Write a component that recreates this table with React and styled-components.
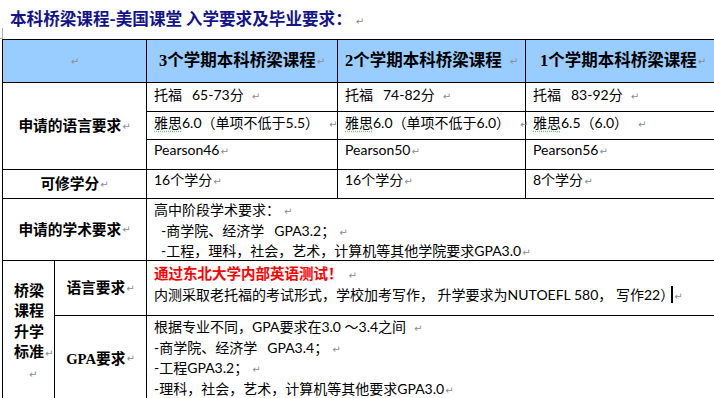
import React from "react";
import styled, { createGlobalStyle } from "styled-components";

const GlobalStyle = createGlobalStyle`
  html, body { margin: 0; padding: 0; background: #fff; overflow: hidden; }
  body { font-family: Lato, "Noto Sans CJK SC", sans-serif; color: #000; }
`;

const Page = styled.div`
  position: relative;
  width: 714px;
  height: 398px;
  overflow: hidden;
  padding-left: 2px;
  box-sizing: border-box;
`;

const Corner = styled.span`
  position: absolute;
  left: 0;
  top: 28px;
  width: 2px;
  height: 10px;
  border-right: 1px solid #b0b0b0;
  border-bottom: 1px solid #b0b0b0;
`;

const Title = styled.h1`
  margin: 0;
  padding: 7px 0 0 8px;
  height: 39px;
  box-sizing: border-box;
  font: bold 16.6px/22px "Noto Sans CJK SC", sans-serif;
  color: #14148a;
  white-space: nowrap;
`;

const Grid = styled.div`
  display: grid;
  grid-template-columns: 52px 92px 191px 188px 195px;
  grid-template-rows: 43px 29px 28px 30px 29px 62px 55px 86px;
  border-left: 1px solid #000;
  border-top: 1px solid #000;
  width: max-content;
`;

const Cell = styled.div`
  grid-column: ${(p) => p.$col};
  grid-row: ${(p) => p.$row};
  border-right: 1px solid #000;
  border-bottom: 1px solid #000;
  box-sizing: border-box;
  min-width: 0;
  white-space: nowrap;
`;

const HeadCell = styled(Cell)`
  background: #99ccff;
  display: flex;
  align-items: center;
  justify-content: center;
  font: bold 16.5px/22px "Liberation Serif", "Noto Sans CJK SC", serif;
`;

const LabelCell = styled(Cell)`
  display: flex;
  align-items: center;
  justify-content: center;
  font: bold 14.7px/20px "Liberation Serif", "Noto Sans CJK SC", serif;
`;

const StackCell = styled(Cell)`
  display: flex;
  flex-direction: column;
  justify-content: center;
  padding-left: 11px;
  font: bold 15px/20.5px "Noto Sans CJK SC", sans-serif;
`;

const BodyCell = styled(Cell)`
  padding: ${(p) => (p.$top ? p.$top : "1px")} 7px 0;
  font-size: 14px;
  line-height: 20.5px;
`;

const Line = styled.div`
  padding-left: ${(p) => p.$indent || 0}px;
`;

const Mark = styled.span`
  font: 10px "DejaVu Sans", sans-serif;
  color: #8c8c8c;
  margin-left: ${(p) => p.$gap || 1}px;
`;

const Gap = styled.span`
  display: inline-block;
  width: ${(p) => p.$w}px;
`;

const Spell = styled.span`
  text-decoration: underline dotted #72c872;
  text-underline-offset: 3px;
`;

const Red = styled.span`
  color: #ff0000;
  font-weight: bold;
  font-size: 14.5px;
  font-family: "Noto Sans CJK SC", sans-serif;
`;

const Caret = styled.span`
  display: inline-block;
  width: 2px;
  height: 17px;
  background: #000;
  vertical-align: -3px;
  margin-left: -3px;
`;

const headers = ["3个学期本科桥梁课程", "2个学期本科桥梁课程", "1个学期本科桥梁课程"];
const toefl = ["65-73分", "74-82分", "83-92分"];
const ielts = ["6.0（单项不低于5.5）", "6.0（单项不低于6.0）", "6.5（6.0）"];
const pearson = ["Pearson46", "Pearson50", "Pearson56"];
const credits = ["16个学分", "16个学分", "8个学分"];

export default function App() {
  return (
    <>
      <GlobalStyle />
      <Page>
        <Corner />
        <Title>
          本科桥梁课程-美国课堂 入学要求及毕业要求：<Mark $gap={4}>↵</Mark>
        </Title>
        <Grid>
          <HeadCell $col="1 / 3" $row="1">
            <Mark>↵</Mark>
          </HeadCell>
          {headers.map((h, i) => (
            <HeadCell key={h} $col={`${i + 3}`} $row="1">
              {h}
              <Mark $gap={i === 1 ? 8 : 1}>↵</Mark>
            </HeadCell>
          ))}

          <LabelCell $col="1 / 3" $row="2 / 5">
            申请的语言要求<Mark>↵</Mark>
          </LabelCell>
          {toefl.map((t, i) => (
            <BodyCell key={t} $col={`${i + 3}`} $row="2" $top="2px">
              托福<Gap $w={10} />
              {t}
              <Mark $gap={8}>↵</Mark>
            </BodyCell>
          ))}
          {ielts.map((t, i) => (
            <BodyCell key={t} $col={`${i + 3}`} $row="3">
              <Spell>雅思</Spell>
              {t}
              <Mark $gap={10}>↵</Mark>
            </BodyCell>
          ))}
          {pearson.map((t, i) => (
            <BodyCell key={t} $col={`${i + 3}`} $row="4" $top="0px">
              {t}
              <Mark>↵</Mark>
            </BodyCell>
          ))}

          <LabelCell $col="1 / 3" $row="5">
            可修学分<Mark>↵</Mark>
          </LabelCell>
          {credits.map((t, i) => (
            <BodyCell key={i} $col={`${i + 3}`} $row="5" $top="0px">
              {t}
              <Mark>↵</Mark>
            </BodyCell>
          ))}

          <LabelCell $col="1 / 3" $row="6">
            申请的学术要求<Mark>↵</Mark>
          </LabelCell>
          <BodyCell $col="3 / 6" $row="6">
            <Line>
              高中阶段学术要求：<Mark $gap={4}>↵</Mark>
            </Line>
            <Line $indent={7}>
              -商学院、经济学<Gap $w={10} />GPA3.2；<Mark $gap={4}>↵</Mark>
            </Line>
            <Line $indent={7}>
              -工程，理科，社会，艺术，计算机等其他学院要求GPA3.0<Mark>↵</Mark>
            </Line>
          </BodyCell>

          <StackCell $col="1" $row="7 / 9">
            <Line>桥梁</Line>
            <Line>课程</Line>
            <Line>升学</Line>
            <Line>
              标准<Mark>↵</Mark>
            </Line>
            <Line $indent={14}>
              <Mark>↵</Mark>
            </Line>
          </StackCell>
          <LabelCell $col="2" $row="7">
            语言要求<Mark>↵</Mark>
          </LabelCell>
          <BodyCell $col="3 / 6" $row="7" $top="2px">
            <Line>
              <Red>通过东北大学内部英语测试！</Red>
              <Mark $gap={6}>↵</Mark>
            </Line>
            <Line>
              内测采取老托福的考试形式，学校加考写作， 升学要求为NUTOEFL 580， 写作22）
              <Caret />
              <Mark $gap={0}>↵</Mark>
            </Line>
          </BodyCell>

          <LabelCell $col="2" $row="8">
            GPA要求<Mark>↵</Mark>
          </LabelCell>
          <BodyCell $col="3 / 6" $row="8">
            <Line>
              根据专业不同，GPA要求在3.0 ～3.4之间<Mark $gap={8}>↵</Mark>
            </Line>
            <Line>
              -商学院、经济学<Gap $w={10} />GPA3.4；<Mark $gap={4}>↵</Mark>
            </Line>
            <Line>
              -工程GPA3.2；<Mark $gap={4}>↵</Mark>
            </Line>
            <Line>
              -理科，社会，艺术，计算机等其他要求GPA3.0<Mark>↵</Mark>
            </Line>
          </BodyCell>
        </Grid>
      </Page>
    </>
  );
}
